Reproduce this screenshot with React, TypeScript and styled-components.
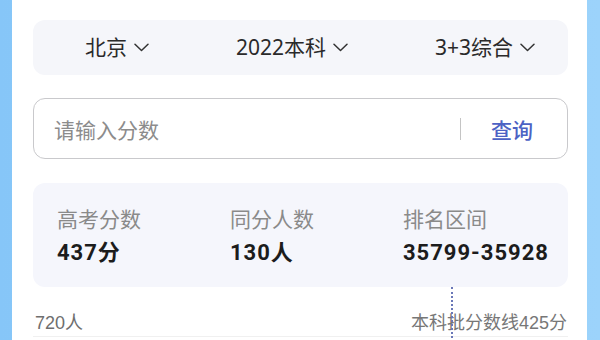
import React from "react";
import styled, { createGlobalStyle } from "styled-components";

const Global = createGlobalStyle`
  html, body { margin: 0; padding: 0; background: #8dcbfa; }
  body { font-family: "Noto Sans CJK SC", "Noto Sans", sans-serif; }
`;

const Frame = styled.div`
  width: 600px;
  height: 340px;
  overflow: hidden;
  box-sizing: border-box;
  padding: 0 13px 0 12px;
  background: linear-gradient(90deg, #86c6f8 0%, #9cd3fb 100%);
`;

const Sheet = styled.div`
  height: 340px;
  background: #ffffff;
  box-sizing: border-box;
  padding: 20px 19px 0 21px;
  display: flex;
  flex-direction: column;
`;

const FilterBar = styled.div`
  height: 55px;
  border-radius: 12px;
  background: #f5f6fa;
  display: flex;
  align-items: center;
  justify-content: space-between;
  padding: 0 33px 0 52px;
`;

const FilterItem = styled.div`
  display: flex;
  align-items: center;
  gap: 7px;
  font-size: 21px;
  color: #2a2a2a;
  font-family: "Noto Sans", "Noto Sans CJK SC", sans-serif;
  line-height: 1;
`;

const Chevron = () => (
  <svg width="15" height="9" viewBox="0 0 15 9" fill="none">
    <path d="M1 1.2 L7.5 7.5 L14 1.2" stroke="#333" strokeWidth="1.5" strokeLinecap="round" strokeLinejoin="round" />
  </svg>
);

const SearchBox = styled.div`
  margin-top: 23px;
  height: 61px;
  box-sizing: border-box;
  border: 1.5px solid #c9c9cc;
  border-radius: 12px;
  display: flex;
  align-items: center;
  padding: 0 34px 0 20px;
`;

const Placeholder = styled.div`
  flex: 1;
  font-size: 21px;
  color: #8c8c8c;
`;

const Divider = styled.div`
  width: 1.5px;
  height: 22px;
  background: #c4c4c4;
  margin-right: 30px;
`;

const QueryButton = styled.div`
  font-size: 21px;
  color: #4c62c4;
  font-weight: 500;
`;

const StatsCard = styled.div`
  margin-top: 24px;
  height: 104px;
  border-radius: 12px;
  background: #f5f6fc;
  display: grid;
  grid-template-columns: 173px 173px 1fr;
  align-content: center;
  padding: 0 0 0 24px;
`;

const StatCol = styled.div`
  display: flex;
  flex-direction: column;
  gap: 9px;
`;

const StatLabel = styled.div`
  font-size: 21px;
  color: #8a8a8a;
  line-height: 26px;
`;

const StatValue = styled.div`
  font-family: Roboto, "Noto Sans CJK SC", sans-serif;
  font-weight: 700;
  font-size: 22px;
  letter-spacing: 1px;
  color: #1c1c1c;
  line-height: 26px;
`;

const ChartArea = styled.div`
  position: relative;
  flex: 1;
  display: flex;
  justify-content: space-between;
  align-items: flex-start;
  padding: 25px 1px 0 2px;
  border-bottom: 1px solid #f0f0f0;
  margin-bottom: 3px;
`;

const AxisLabel = styled.div`
  font-family: "Liberation Sans", "Noto Sans CJK SC", sans-serif;
  font-size: 18px;
  color: #6e6e6e;
  line-height: 22px;
`;

const LineLabel = styled.div`
  font-family: "Liberation Sans", "Noto Sans CJK SC", sans-serif;
  font-size: 18px;
  color: #777;
  line-height: 22px;
`;

const DashedLine = styled.div`
  position: absolute;
  top: 0;
  bottom: -6px;
  left: 418px;
  border-left: 2px dotted #6a78b8;
`;

export default function App() {
  return (
    <>
      <Global />
      <Frame>
        <Sheet>
          <FilterBar>
            <FilterItem>北京<Chevron /></FilterItem>
            <FilterItem>2022本科<Chevron /></FilterItem>
            <FilterItem>3+3综合<Chevron /></FilterItem>
          </FilterBar>
          <SearchBox>
            <Placeholder>请输入分数</Placeholder>
            <Divider />
            <QueryButton>查询</QueryButton>
          </SearchBox>
          <StatsCard>
            <StatCol>
              <StatLabel>高考分数</StatLabel>
              <StatValue>437分</StatValue>
            </StatCol>
            <StatCol>
              <StatLabel>同分人数</StatLabel>
              <StatValue>130人</StatValue>
            </StatCol>
            <StatCol>
              <StatLabel>排名区间</StatLabel>
              <StatValue>35799-35928</StatValue>
            </StatCol>
          </StatsCard>
          <ChartArea>
            <AxisLabel>720人</AxisLabel>
            <LineLabel>本科批分数线425分</LineLabel>
            <DashedLine />
          </ChartArea>
        </Sheet>
      </Frame>
    </>
  );
}
